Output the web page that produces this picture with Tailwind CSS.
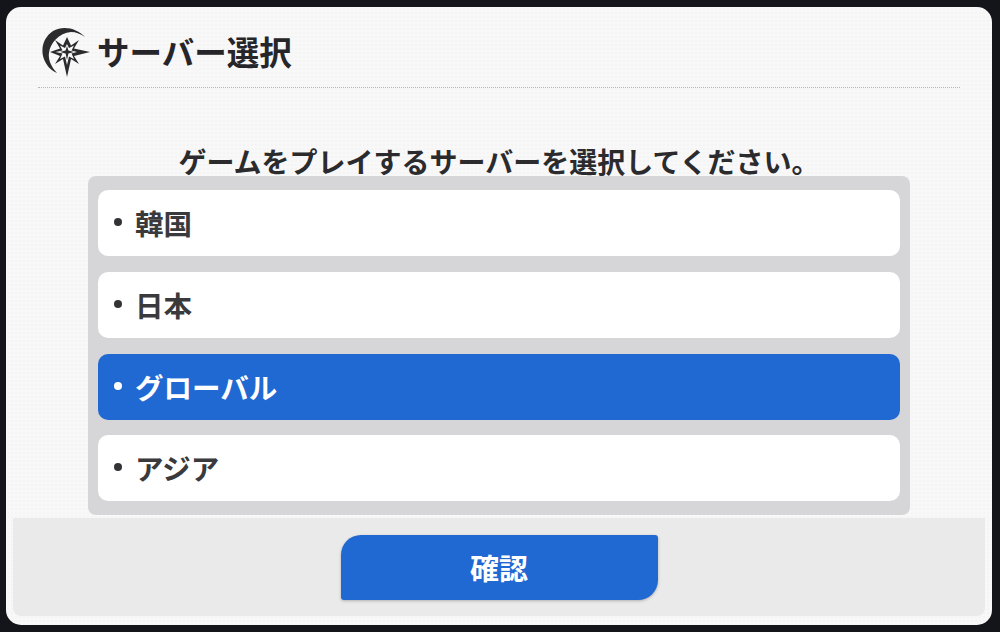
<!DOCTYPE html>
<html lang="ja"><head><meta charset="utf-8">
<script src="https://cdn.jsdelivr.net/npm/@tailwindcss/browser@4"></script>
</head>
<body class="w-[1000px] h-[632px] overflow-hidden bg-[#14151b] font-['Noto_Sans_CJK_JP','Noto_Sans',sans-serif]">
<div class="pt-[7px] pl-[6px] pr-[8px] pb-[7px] h-[632px]">
<div class="h-[618px] rounded-[15px] bg-[#f9f8f9] bg-[radial-gradient(#f5f4f5_1px,transparent_1px)] bg-[size:4px_4px] pl-[7px] pr-[7px] pb-[9px] flex flex-col">
  <header class="mx-[25px] h-[81px] border-b border-dotted border-[#b5b5b5] flex items-center pt-[10px] pl-[3px] gap-[6px]">
    <svg class="w-[50px] h-[52px] shrink-0" viewBox="0 0 50 52">
      <path d="M44 11 C36 2 22 -1 12 5 C3 11 0 21 2 30 C4 38 9 44 16 47 C10 41 7 33 8 27 C9 17 18 7 30 6 C35 6 40 8 44 11 Z" fill="#2b2b2e"/>
      <path d="M26 11 L30 19.500 L38 14 L33 22.500 L49 26 L33 30 L38 38 L30 33 L26 51 L22 33 L14 38 L19 30 L9 26 L19 22.500 L14 14 L22 19.500 Z" fill="#2b2b2e"/>
      <path d="M26 18 L28 22 L33 19.500 L30.500 24.500 L36 26 L30.500 27.500 L33 33 L28 30.500 L26 39 L24 30.500 L19 33 L21.500 27.500 L14.500 26 L21.500 24.500 L19 19.500 L24 22 Z" fill="#f9f8f9"/>
      <path d="M26 20 L27.400 24.600 L33 26 L27.400 27.400 L26 34 L24.600 27.400 L19 26 L24.600 24.600 Z" fill="#2b2b2e"/>
    </svg>
    <h1 class="text-[32.500px] leading-none font-bold text-[#26262a] -mt-[1px]">サーバー選択</h1>
  </header>
  <div class="flex-1 flex flex-col items-center">
    <p class="mt-[58px] h-[30px] text-[28px] leading-[30px] font-bold text-[#2b2b2e] whitespace-nowrap">ゲームをプレイするサーバーを選択してください。</p>
    <ul class="w-[822px] h-[339px] rounded-[8px] bg-[#d6d5d7] px-[10px] pt-[14px] flex flex-col gap-[16px]">
      <li class="h-[66px] rounded-[10px] bg-white flex items-center pl-[16px] gap-[13px] text-[#3a3a3d]"><span class="w-[8px] h-[8px] rounded-full bg-[#333336] -mt-[3px]"></span><span class="text-[28.500px] leading-none font-bold mt-[1px]">韓国</span></li>
      <li class="h-[66px] rounded-[10px] bg-white flex items-center pl-[16px] gap-[13px] text-[#3a3a3d]"><span class="w-[8px] h-[8px] rounded-full bg-[#333336] -mt-[3px]"></span><span class="text-[28.500px] leading-none font-bold mt-[1px]">日本</span></li>
      <li class="h-[66px] rounded-[10px] bg-[#2068d2] flex items-center pl-[16px] gap-[13px] text-white"><span class="w-[8px] h-[8px] rounded-full bg-white -mt-[3px]"></span><span class="text-[28.500px] leading-none font-bold mt-[1px]">グローバル</span></li>
      <li class="h-[66px] -mt-[1px] rounded-[10px] bg-white flex items-center pl-[16px] gap-[13px] text-[#3a3a3d]"><span class="w-[8px] h-[8px] rounded-full bg-[#333336] -mt-[3px]"></span><span class="text-[28.500px] leading-none font-bold mt-[1px]">アジア</span></li>
    </ul>
  </div>
  <footer class="h-[98px] mt-[3px] rounded-b-[8px] bg-[#ebeaeb] flex justify-center pt-[17px]">
    <button class="w-[317px] h-[65px] rounded-tl-[20px] rounded-br-[20px] rounded-tr-[3px] rounded-bl-[3px] bg-[#2068d2] text-white text-[29px] leading-none font-bold shadow-[0_1px_3px_rgba(0,0,0,0.25)]">確認</button>
  </footer>
</div>
</div>
</body></html>
